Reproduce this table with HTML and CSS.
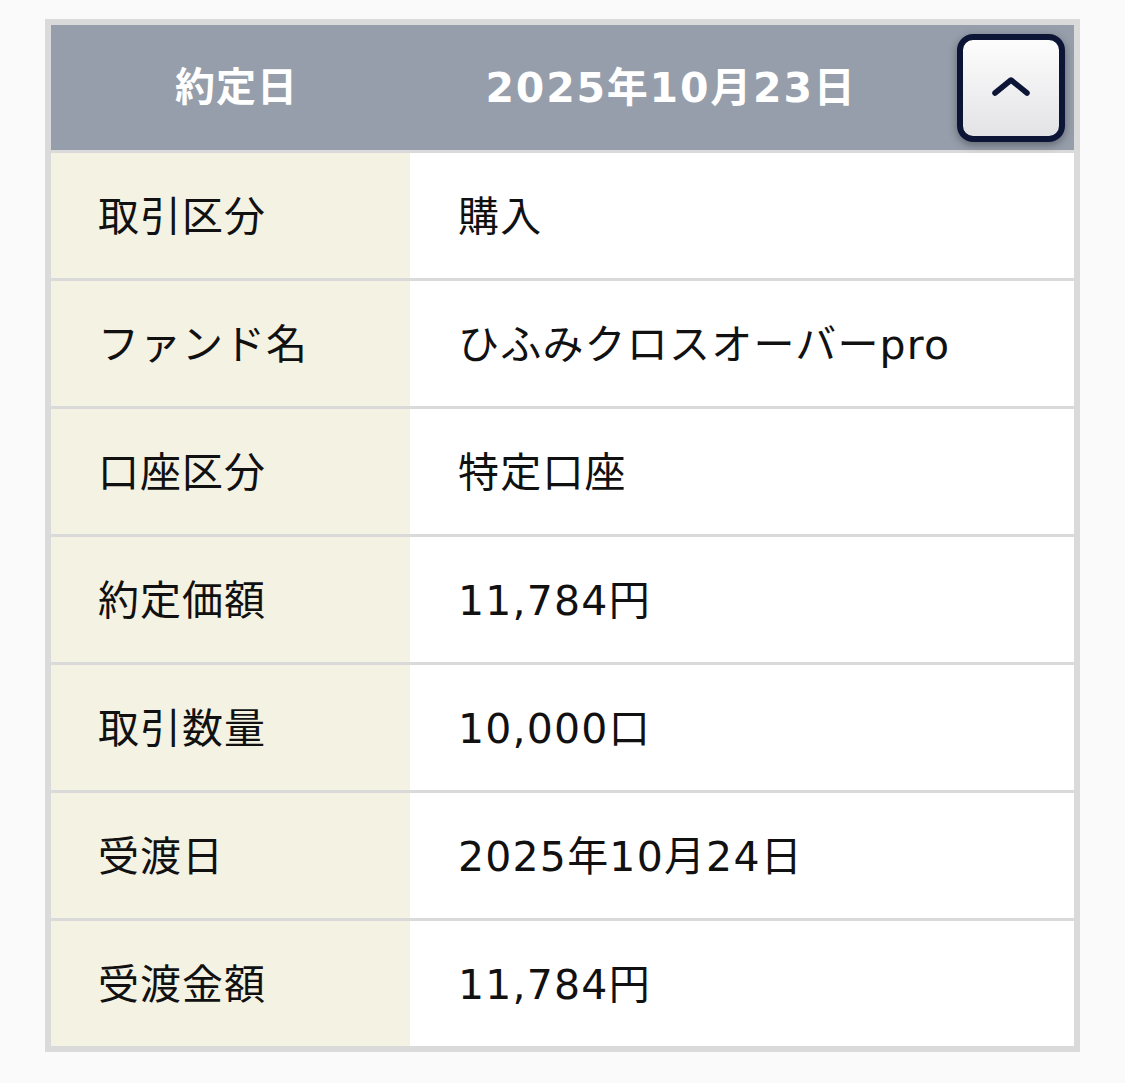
FILE: index.html
```html
<!DOCTYPE html>
<html lang="ja">
<head>
<meta charset="utf-8">
<link rel="stylesheet" href="styles.css">
</head>
<body>
<div class="card">
  <div class="head">
    <div class="head-label">約定日</div>
    <div class="head-date">2025年10月23日</div>
    <button class="toggle" type="button" aria-label="閉じる">
      <svg width="38" height="20" viewBox="0 0 38 20"><path d="M3 17 L19 4 L35 17" fill="none" stroke="#0c1535" stroke-width="5.5" stroke-linecap="round" stroke-linejoin="round"/></svg>
    </button>
  </div>
  <div class="row"><div class="label">取引区分</div><div class="value">購入</div></div>
  <div class="row"><div class="label">ファンド名</div><div class="value">ひふみクロスオーバーpro</div></div>
  <div class="row"><div class="label">口座区分</div><div class="value">特定口座</div></div>
  <div class="row"><div class="label">約定価額</div><div class="value">11,784円</div></div>
  <div class="row"><div class="label">取引数量</div><div class="value">10,000口</div></div>
  <div class="row"><div class="label">受渡日</div><div class="value">2025年10月24日</div></div>
  <div class="row"><div class="label">受渡金額</div><div class="value">11,784円</div></div>
</div>
</body>
</html>
```
FILE: styles.css
```css
html, body {
  margin: 0;
  padding: 0;
  background: #fafafa;
}
body {
  padding: 19px 45px 30px 45px;
  font-family: "DejaVu Sans", "Noto Sans CJK JP", sans-serif;
  color: #111;
}
.card {
  width: 1023px;
  border: 6px solid #dadada;
  background: #dadada;
  display: flex;
  flex-direction: column;
  gap: 3px;
}
.head {
  height: 125px;
  background: #969eab;
  display: flex;
  align-items: center;
  color: #fff;
  font-weight: 700;
  font-size: 40px;
}
.head-label,
.head-date {
  padding-bottom: 7px;
}
.head-label {
  width: 359px;
  text-align: center;
  padding-left: 12px;
  box-sizing: border-box;
  letter-spacing: 1px;
}
.head-date {
  width: 522px;
  text-align: center;
  font-size: 41px;
  letter-spacing: 1.8px;
}
.toggle {
  margin-left: auto;
  margin-right: 9px;
  width: 108px;
  height: 108px;
  box-sizing: border-box;
  border: 6px solid #0c1535;
  border-radius: 16px;
  background: linear-gradient(#fdfdfd, #e3e3e6);
  box-shadow: 0 3px 8px rgba(0,0,0,0.35);
  display: flex;
  align-items: center;
  justify-content: center;
  padding: 0 0 4px 0;
}
.row {
  display: flex;
  height: 125px;
  font-size: 41px;
  letter-spacing: 1px;
}
.label {
  width: 359px;
  background: #f4f2e3;
  display: flex;
  align-items: center;
  padding-left: 47px;
  padding-bottom: 6px;
  box-sizing: border-box;
}
.value {
  flex: 1;
  background: #fff;
  display: flex;
  align-items: center;
  padding-left: 48px;
  padding-bottom: 6px;
  letter-spacing: 1.2px;
}
```
